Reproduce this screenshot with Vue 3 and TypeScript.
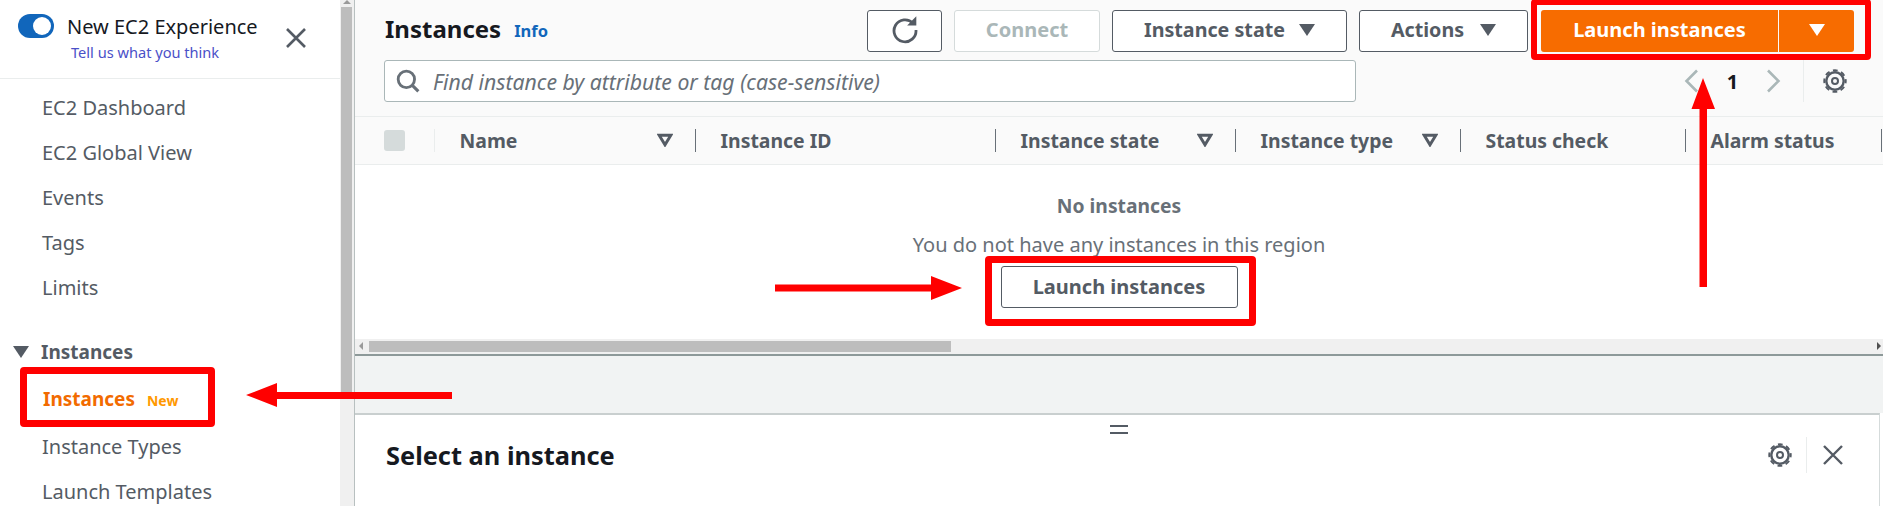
<script setup lang="ts">
// EC2 instances console with the tutorial's red callouts drawn on top.
type NavItem = { label: string; active?: boolean; badge?: string }

const navItems: NavItem[] = [
  { label: 'EC2 Dashboard' },
  { label: 'EC2 Global View' },
  { label: 'Events' },
  { label: 'Tags' },
  { label: 'Limits' },
]
const instanceItems: NavItem[] = [
  { label: 'Instances', active: true, badge: 'New' },
  { label: 'Instance Types' },
  { label: 'Launch Templates' },
]

const columns = [
  { label: 'Name', sort: true, width: 261 },
  { label: 'Instance ID', sort: false, width: 300 },
  { label: 'Instance state', sort: true, width: 240 },
  { label: 'Instance type', sort: true, width: 225 },
  { label: 'Status check', sort: false, width: 225 },
  { label: 'Alarm status', sort: false, width: 196 },
]
</script>

<template>
  <div class="page">
    <aside class="side">
      <div class="side-head">
        <span class="toggle"><span class="knob"></span></span>
        <div class="exp">
          <div class="exp-title">New EC2 Experience</div>
          <a class="exp-link">Tell us what you think</a>
        </div>
        <svg class="close" width="20" height="20" viewBox="0 0 20 20">
          <path d="M1 1l18 18M19 1L1 19" stroke="#545b64" stroke-width="2.600" fill="none" />
        </svg>
      </div>
      <nav class="nav">
        <div v-for="item in navItems" :key="item.label" class="nav-item">{{ item.label }}</div>
        <div class="nav-group">
          <span class="tri"></span>
          Instances
        </div>
        <div
          v-for="item in instanceItems"
          :key="item.label"
          class="nav-item"
          :class="{ active: item.active }"
        >
          {{ item.label }}<span v-if="item.badge" class="badge">{{ item.badge }}</span>
        </div>
      </nav>
    </aside>

    <div class="side-scroll"><span class="side-up"></span><span class="side-thumb"></span></div>

    <main class="main">
      <section class="list">
        <div class="tools">
          <div class="tools-row">
            <h1 class="title">Instances</h1>
            <a class="info">Info</a>
            <div class="actions">
              <button class="btn btn-refresh" type="button" aria-label="Refresh">
                <svg width="28" height="28" viewBox="0 0 26 26" fill="none">
                  <path d="M20.500 6.800A10.200 10.200 0 1 0 23.200 13" stroke="#545b64" stroke-width="2.600" />
                  <path d="M15 8.800h8.500V.3z" fill="#545b64" />
                </svg>
              </button>
              <button class="btn btn-connect" type="button">Connect</button>
              <button class="btn btn-state" type="button">Instance state<span class="caret"></span></button>
              <button class="btn btn-actions" type="button">Actions<span class="caret"></span></button>
              <div class="launch">
                <button class="launch-main" type="button">Launch instances</button>
                <button class="launch-drop" type="button" aria-label="More"><span class="caret white"></span></button>
              </div>
            </div>
          </div>
          <div class="tools-row second">
            <div class="search">
              <svg width="24" height="24" viewBox="0 0 22 22" fill="none">
                <circle cx="9.500" cy="9.500" r="7.500" stroke="#687078" stroke-width="2.600" />
                <path d="M14.500 14.500l6 6" stroke="#687078" stroke-width="2.800" />
              </svg>
              <span class="placeholder">Find instance by attribute or tag (case-sensitive)</span>
            </div>
            <div class="pager">
              <svg class="chev" width="15" height="26" viewBox="0 0 15 24" fill="none">
                <path d="M13 1.500L2.500 12 13 22.500" stroke="#aab7b8" stroke-width="2.600" />
              </svg>
              <span class="page-num">1</span>
              <svg class="chev" width="15" height="26" viewBox="0 0 15 24" fill="none">
                <path d="M2 1.500L12.500 12 2 22.500" stroke="#aab7b8" stroke-width="2.600" />
              </svg>
              <span class="pager-sep"></span>
              <svg class="gear" width="24" height="24" viewBox="0 0 24 24" fill="none" stroke="#545b64">
                <circle cx="12" cy="12" r="8.700" stroke-width="2.400" />
                <circle cx="12" cy="12" r="10.700" stroke-width="2" stroke-dasharray="4.800 3.600" stroke-dashoffset="2.400" />
                <circle cx="12" cy="12" r="3" stroke-width="2" />
              </svg>
            </div>
          </div>
        </div>

        <div class="thead">
          <div class="th th-check"><span class="check"></span></div>
          <div
            v-for="col in columns"
            :key="col.label"
            class="th"
            :style="{ width: col.width + 'px' }"
          >
            <span>{{ col.label }}</span>
            <svg v-if="col.sort" class="sort" width="16" height="14" viewBox="0 0 15 13" fill="none">
              <path d="M2 2h11L7.500 11z" stroke="#545b64" stroke-width="2.800" />
            </svg>
          </div>
        </div>

        <div class="empty">
          <div class="empty-title">No instances</div>
          <div class="empty-text">You do not have any instances in this region</div>
          <button class="btn btn-empty" type="button">Launch instances</button>
        </div>

        <div class="h-scroll">
          <span class="arrow-left"></span>
          <span class="h-thumb"></span>
          <span class="arrow-right"></span>
        </div>
      </section>

      <div class="gap"></div>

      <section class="detail">
        <span class="handle"></span>
        <h2 class="detail-title">Select an instance</h2>
        <div class="detail-icons">
          <svg width="24" height="24" viewBox="0 0 24 24" fill="none" stroke="#545b64">
            <circle cx="12" cy="12" r="8.700" stroke-width="2.400" />
            <circle cx="12" cy="12" r="10.700" stroke-width="2" stroke-dasharray="4.800 3.600" stroke-dashoffset="2.400" />
            <circle cx="12" cy="12" r="3" stroke-width="2" />
          </svg>
          <span class="detail-sep"></span>
          <svg width="20" height="20" viewBox="0 0 20 20">
            <path d="M1 1l18 18M19 1L1 19" stroke="#545b64" stroke-width="2.400" fill="none" />
          </svg>
        </div>
      </section>
    </main>

    <!-- tutorial callouts -->
    <span class="mark mark-launch"></span>
    <span class="mark mark-empty"></span>
    <span class="mark mark-nav"></span>
    <svg class="arrows" width="1886" height="506" viewBox="0 0 1886 506">
      <g fill="#f00">
        <path d="M775 284.500h156V276l31 12-31 12v-8.500H775z" />
        <path d="M452 392v7H277v8l-31-12 31-12v9z" />
        <path d="M1699.500 287V109H1691.500L1703 78l12 31h-8v178z" />
      </g>
    </svg>
  </div>
</template>

<style scoped>
.page {
  position: relative;
  display: flex;
  width: 1886px;
  height: 506px;
  overflow: hidden;
  background: #fff;
  font-family: "Noto Sans", sans-serif;
  color: #545b64;
}
.side { width: 340px; flex: none; }
.side-head {
  display: flex;
  height: 79px;
  padding: 14px 0 0 18px;
  box-sizing: border-box;
  border-bottom: 1px solid #eaeded;
}
.toggle {
  width: 36px;
  height: 24px;
  border-radius: 12px;
  background: #1166bb;
  display: flex;
  align-items: center;
  justify-content: flex-end;
  padding-right: 3px;
  box-sizing: border-box;
  flex: none;
}
.knob { width: 18px; height: 18px; border-radius: 50%; background: #fff; }
.exp { margin-left: 13px; width: 219px; }
.exp-title { font-size: 20px; line-height: 26px; color: #16191f; white-space: nowrap; }
.exp-link { display: block; margin: 1px 0 0 4px; font-size: 14.600px; line-height: 22px; color: #4a50c8; white-space: nowrap; }
.close { margin-top: 14px; flex: none; }
.nav { padding-top: 6px; }
.nav-item {
  height: 45px;
  line-height: 45px;
  padding-left: 42px;
  font-size: 20px;
  white-space: nowrap;
}
.nav-item.active { height: 47px; padding-left: 43px; color: #f26b00; font-weight: 700; font-size: 19px; }
.badge { margin-left: 12px; font-size: 14px; color: #ff9900; font-weight: 700; }
.nav-group {
  display: flex;
  align-items: center;
  margin: 19px 0 3px;
  height: 45px;
  padding-left: 13px;
  font-size: 19px;
  font-weight: 700;
}
.tri {
  width: 0;
  height: 0;
  margin-right: 12px;
  border-left: 8px solid transparent;
  border-right: 8px solid transparent;
  border-top: 12px solid #545b64;
}
.side-scroll {
  position: relative;
  width: 14px;
  flex: none;
  background: #f0f0f0;
  border-right: 1px solid #b8c0c0;
  padding-top: 7px;
  box-sizing: content-box;
}
.side-thumb { display: block; margin-left: 1px; width: 11px; height: 388px; background: #bdbdbd; }
.side-up {
  position: absolute;
  top: 0;
  left: 3px;
  border-left: 4px solid transparent;
  border-right: 4px solid transparent;
  border-bottom: 4px solid #9a9a9a;
}
.main { width: 1528px; flex: none; display: flex; flex-direction: column; }
.list { background: #fff; }
.tools {
  height: 117px;
  box-sizing: border-box;
  padding: 10px 0 0 30px;
  background: #fafafa;
  border-bottom: 1px solid #eaeded;
}
.tools-row { display: flex; align-items: center; height: 41px; }
.tools-row.second { margin-top: 9px; height: 42px; }
.title { margin: -4px 0 0; font-size: 24px; font-weight: 700; color: #16191f; line-height: 38px; }
.info { margin: -1px 0 0 13px; font-size: 16.500px; font-weight: 700; color: #1166bb; }
.actions { margin-left: auto; margin-right: 29px; display: flex; align-items: center; }
.btn {
  height: 42px;
  box-sizing: border-box;
  border: 1px solid #545b64;
  border-radius: 3px;
  background: #fff;
  color: #545b64;
  font: 700 19.700px "Noto Sans", sans-serif;
  padding: 0 0 2px;
  display: flex;
  align-items: center;
  justify-content: center;
}
.btn-refresh { width: 75px; }
.btn-connect { width: 146px; margin-left: 12px; border-color: #d5dbdb; color: #aab7b8; font-size: 20px; }
.btn-state { width: 235px; margin-left: 12px; }
.btn-actions { width: 169px; margin-left: 12px; }
.caret {
  width: 0;
  height: 0;
  margin-left: 14px;
  border-left: 8px solid transparent;
  border-right: 8px solid transparent;
  border-top: 12px solid #545b64;
}
.btn-actions .caret { margin-left: 16px; }
.caret.white { margin-left: 0; border-top-color: #fff; }
.launch { display: flex; margin-left: 13px; }
.launch-main,
.launch-drop {
  height: 42px;
  border: 0;
  background: #f76c00;
  color: #fff;
  font: 700 20px "Noto Sans", sans-serif;
  padding: 0 0 2px;
  display: flex;
  align-items: center;
  justify-content: center;
}
.launch-main { width: 237px; border-radius: 3px 0 0 3px; }
.launch-drop { width: 75px; margin-left: 1px; border-radius: 0 3px 3px 0; }
.search {
  width: 972px;
  margin-left: -1px;
  height: 42px;
  box-sizing: border-box;
  border: 1px solid #aab7b8;
  border-radius: 3px;
  background: #fff;
  display: flex;
  align-items: center;
  padding-left: 11px;
}
.placeholder { margin-left: 13px; font-size: 21.200px; font-style: italic; color: #687078; white-space: nowrap; }
.pager { margin-left: auto; margin-right: 36px; display: flex; align-items: center; }
.page-num { width: 67px; text-align: center; font-size: 20px; font-weight: 700; color: #16191f; }
.chev { flex: none; }
.pager-sep { width: 1px; height: 42px; margin: 0 19px 0 22px; background: #eaeded; }
.gear { flex: none; }
.thead {
  display: flex;
  height: 48px;
  box-sizing: border-box;
  padding-left: 0;
  background: #fafafa;
  border-bottom: 1px solid #eaeded;
}
.th {
  position: relative;
  display: flex;
  align-items: center;
  box-sizing: border-box;
  padding-left: 24.500px;
  font-size: 19.400px;
  font-weight: 700;
  white-space: nowrap;
}
.th::after {
  content: "";
  position: absolute;
  top: 12px;
  right: 0;
  width: 1px;
  height: 23px;
  background: #687078;
}
.th-check { width: 80px; padding-left: 29px; }
.th-check::after { background: #eaeded; }
.check { width: 21px; height: 21px; border-radius: 3px; background: #d5dbdb; }
.sort { position: absolute; right: 23px; top: 16px; }
.empty {
  height: 174px;
  box-sizing: border-box;
  padding-top: 25px;
  display: flex;
  flex-direction: column;
  align-items: center;
  width: 1528px;
}
.empty-title { font-size: 19.300px; line-height: 32px; font-weight: 700; color: #687078; }
.empty-text { margin-top: 7px; font-size: 20px; line-height: 32px; color: #687078; white-space: nowrap; }
.btn-empty { width: 237px; margin-top: 5px; font-size: 20px; }
.h-scroll {
  position: relative;
  height: 15px;
  background: #f0f0f0;
  border-bottom: 2px solid #8d9999;
  box-sizing: content-box;
}
.h-thumb { position: absolute; left: 14px; top: 2px; width: 582px; height: 11px; background: #bdbdbd; }
.arrow-left,
.arrow-right {
  position: absolute;
  top: 3px;
  border-top: 4px solid transparent;
  border-bottom: 4px solid transparent;
}
.arrow-left { left: 4px; border-right: 4px solid #9a9a9a; }
.arrow-right { right: 2px; border-left: 4px solid #505050; }
.gap { height: 57px; background: #f1f3f3; }
.detail {
  position: relative;
  flex: 1;
  display: flex;
  align-items: center;
  justify-content: space-between;
  padding: 0 36px 12px 31px;
  box-sizing: border-box;
  border-top: 2px solid #c9cfcf;
  border-right: 1px solid #d5dbdb;
  background: #fff;
  margin-right: 3px;
}
.handle {
  position: absolute;
  top: 10px;
  left: 755px;
  width: 18px;
  height: 5px;
  border-top: 2px solid #545b64;
  border-bottom: 2px solid #545b64;
}
.detail-title { margin: 0; font-size: 25.400px; font-weight: 700; color: #16191f; line-height: 32px; }
.detail-icons { display: flex; align-items: center; }
.detail-sep { width: 1px; height: 36px; margin: 0 16px 0 14px; background: #eaeded; }
.mark {
  position: absolute;
  box-sizing: border-box;
  border: 7px solid #f00;
  border-radius: 4px;
}
.mark-launch { left: 1531px; top: -1px; width: 340px; height: 61px; border-width: 6px; }
.mark-empty { left: 985px; top: 256px; width: 271px; height: 70px; }
.mark-nav { left: 20px; top: 367px; width: 195px; height: 60px; }
.arrows { position: absolute; left: 0; top: 0; pointer-events: none; }
</style>
